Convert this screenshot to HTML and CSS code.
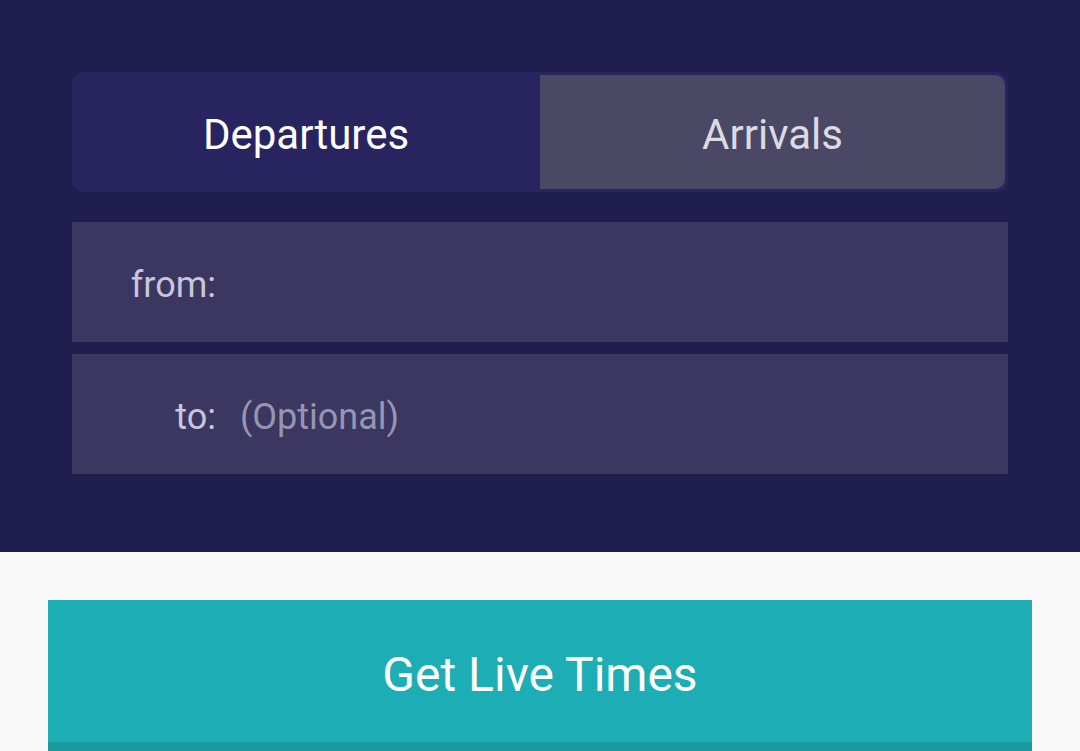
FILE: index.html
```html
<!DOCTYPE html>
<html>
<head>
<meta charset="utf-8">
<link rel="stylesheet" href="styles.css">
</head>
<body>
<div class="top">
  <div class="tabs">
    <div class="tab active">Departures</div>
    <div class="tab inactive">Arrivals</div>
  </div>
  <div class="fields">
    <div class="field"><span class="label">from:</span><span class="value"></span></div>
    <div class="field"><span class="label">to:</span><span class="value placeholder">(Optional)</span></div>
  </div>
</div>
<div class="bottom">
  <div class="btn">Get Live Times</div>
</div>
</body>
</html>
```
FILE: styles.css
```css
html, body {
  margin: 0;
  padding: 0;
  background: #f9f9f9;
  font-family: Roboto, "Liberation Sans", sans-serif;
}
.top {
  background: #201d4f;
  height: 552px;
  box-sizing: border-box;
  padding: 72px 72px 0 72px;
}
.tabs {
  display: flex;
  background: #28245f;
  border-radius: 12px;
  padding: 3px 3px 3px 0;
  height: 120px;
  box-sizing: border-box;
}
.tab {
  display: flex;
  align-items: center;
  justify-content: center;
  font-size: 42px;
  padding-top: 4px;
}
.tab.active {
  width: 468px;
  color: #ffffff;
}
.tab.inactive {
  flex: 1;
  background: #4b4865;
  color: #dcdae3;
  border-radius: 0 10px 10px 0;
}
.fields {
  margin-top: 30px;
  display: flex;
  flex-direction: column;
  gap: 12px;
}
.field {
  height: 120px;
  box-sizing: border-box;
  padding-top: 6px;
  background: #3b3760;
  display: flex;
  align-items: center;
  font-size: 36px;
}
.label {
  width: 144px;
  text-align: right;
  color: #c9c6dc;
}
.value {
  margin-left: 24px;
}
.placeholder {
  color: #9895b4;
}
.bottom {
  padding: 48px 48px 0 48px;
}
.btn {
  height: 151px;
  box-sizing: border-box;
  background: #1caeb4;
  border-bottom: 9px solid #1a999e;
  display: flex;
  align-items: center;
  justify-content: center;
  color: #ffffff;
  font-size: 48px;
  padding-top: 6px;
}
```
